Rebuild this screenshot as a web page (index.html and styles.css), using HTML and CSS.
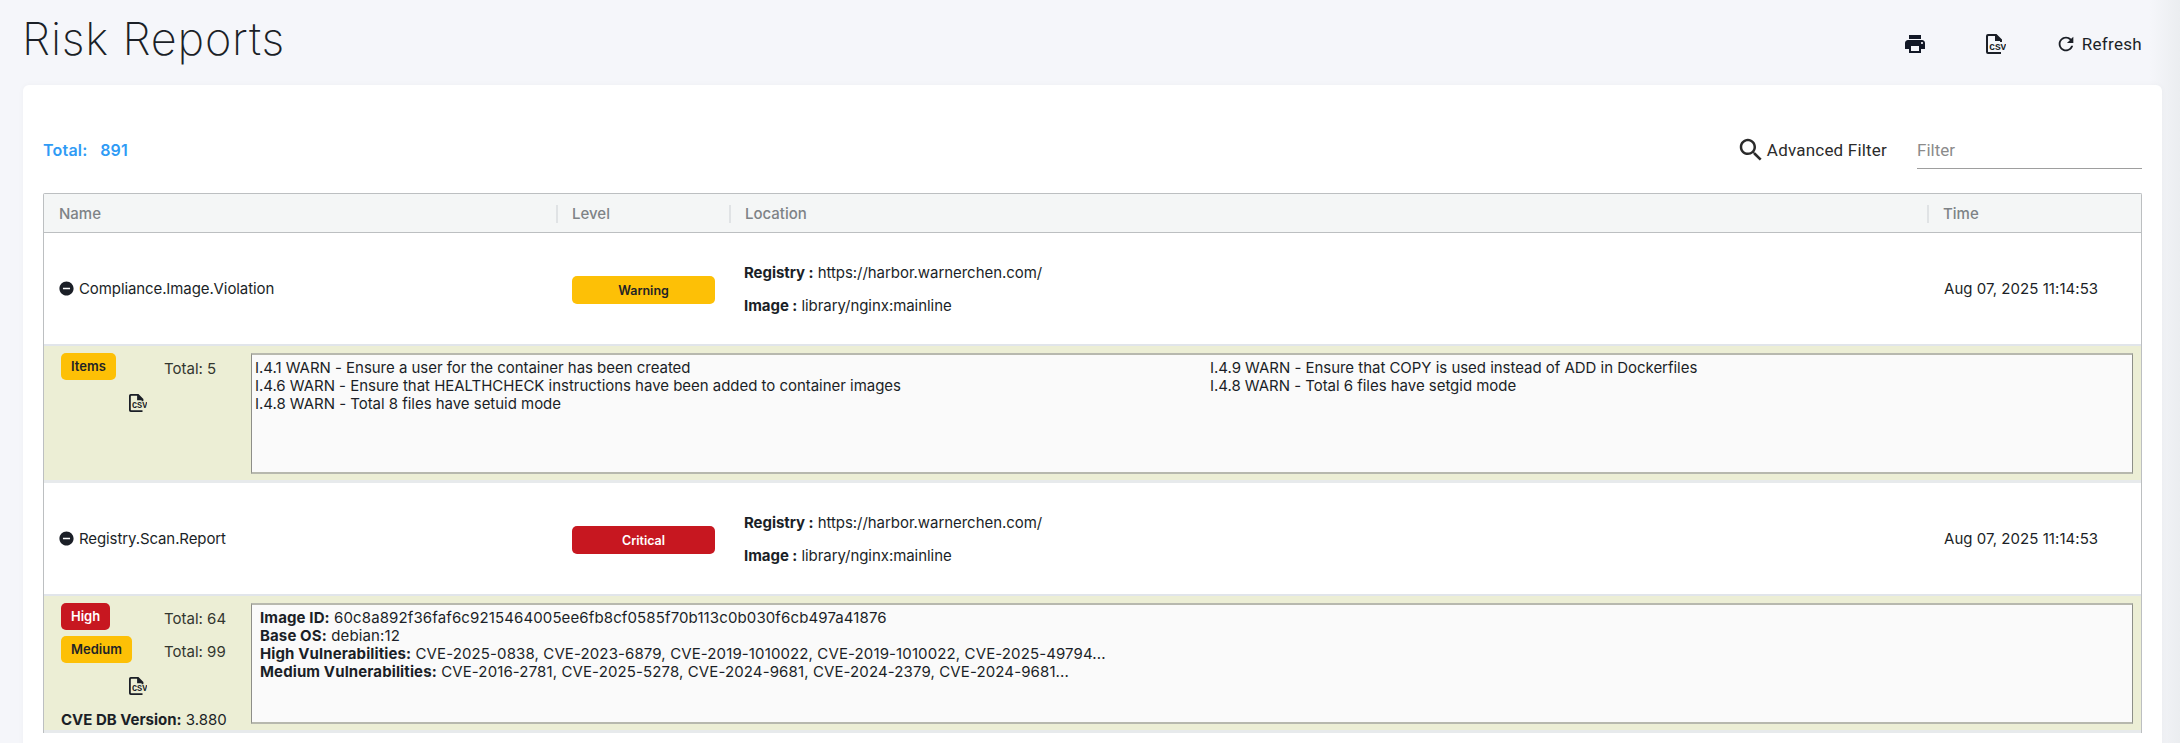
FILE: index.html
```html
<!DOCTYPE html>
<html lang="en">
<head>
    <meta charset="UTF-8">
    <title>Risk Reports</title>
    <link rel="stylesheet" href="styles.css">
</head>
<body>
    <!-- Icons -->
    <svg class="sprite" aria-hidden="true">
        <symbol id="i-print" viewBox="0 0 24 24"><path d="M19 8H5c-1.66 0-3 1.34-3 3v6h4v4h12v-4h4v-6c0-1.66-1.34-3-3-3zm-3 11H8v-5h8v5zm3-7c-.55 0-1-.45-1-1s.45-1 1-1 1 .45 1 1-.45 1-1 1zm-1-9H6v4h12V3z"/></symbol>
        <symbol id="i-refresh" viewBox="0 0 24 24"><path d="M17.65 6.35C16.2 4.9 14.21 4 12 4c-4.42 0-7.99 3.58-7.99 8s3.57 8 7.99 8c3.73 0 6.84-2.55 7.73-6h-2.08c-.82 2.33-3.04 4-5.65 4-3.31 0-6-2.69-6-6s2.69-6 6-6c1.66 0 3.14.69 4.22 1.78L13 11h7V4l-2.35 2.35z"/></symbol>
        <symbol id="i-search" viewBox="0 0 24 24"><path d="M15.5 14h-.79l-.28-.27C15.41 12.59 16 11.11 16 9.5 16 5.91 13.09 3 9.5 3S3 5.91 3 9.5 5.91 16 9.5 16c1.61 0 3.09-.59 4.23-1.57l.27.28v.79l5 4.99L20.49 19l-4.99-5zm-6 0C7.01 14 5 11.99 5 9.5S7.01 5 9.5 5 14 7.01 14 9.5 11.99 14 9.5 14z"/></symbol>
        <symbol id="i-minus" viewBox="0 0 24 24"><path d="M12 2C6.48 2 2 6.48 2 12s4.48 10 10 10 10-4.48 10-10S17.52 2 12 2zm5 11H7v-2h10v2z"/></symbol>
        <symbol id="i-csv" viewBox="0 0 20 20">
            <path d="M2 0h8.500L16 5.500V8h-2V7H9V2H2.500a.5.5 0 0 0-.5.500v15a.5.5 0 0 0 .5.500H15v2H2a2 2 0 0 1-2-2V2a2 2 0 0 1 2-2z"/>
            <text x="3.200" y="15.800" class="csv-text">CSV</text>
        </symbol>
    </svg>

    <header class="page-head">
        <h1>Risk Reports</h1>
        <div class="head-actions">
            <svg class="icon-print"><use href="#i-print"/></svg>
            <svg class="icon-csv"><use href="#i-csv"/></svg>
            <span class="refresh"><svg class="icon-refresh"><use href="#i-refresh"/></svg>Refresh</span>
        </div>
    </header>

    <main class="card">
        <div class="toolbar">
            <div class="total">Total:&nbsp;&nbsp; 891</div>
            <div class="adv-filter"><svg class="icon-search"><use href="#i-search"/></svg>Advanced Filter</div>
            <input class="filter" type="text" placeholder="Filter">
        </div>

        <div class="table">
            <div class="table-head">
                <div>Name</div>
                <div>Level</div>
                <div>Location</div>
                <div>Time</div>
            </div>

            <div class="row">
                <div class="name"><svg class="icon-minus"><use href="#i-minus"/></svg>Compliance.Image.Violation</div>
                <div class="level"><span class="level-pill warning">Warning</span></div>
                <div class="location">
                    <p><b>Registry :</b> https://harbor.warnerchen.com/</p>
                    <p><b>Image :</b> library/nginx:mainline</p>
                </div>
                <div class="time">Aug 07, 2025 11:14:53</div>
            </div>
            <div class="detail">
                <div class="summary">
                    <div class="sev-row"><span class="tag warning">Items</span><span>Total: 5</span></div>
                    <svg class="icon-csv-small"><use href="#i-csv"/></svg>
                </div>
                <div class="box box-cols">
                    <div>
                        <div>I.4.1 WARN - Ensure a user for the container has been created</div>
                        <div>I.4.6 WARN - Ensure that HEALTHCHECK instructions have been added to container images</div>
                        <div>I.4.8 WARN - Total 8 files have setuid mode</div>
                    </div>
                    <div>
                        <div>I.4.9 WARN - Ensure that COPY is used instead of ADD in Dockerfiles</div>
                        <div>I.4.8 WARN - Total 6 files have setgid mode</div>
                    </div>
                </div>
            </div>

            <div class="row">
                <div class="name"><svg class="icon-minus"><use href="#i-minus"/></svg>Registry.Scan.Report</div>
                <div class="level"><span class="level-pill critical">Critical</span></div>
                <div class="location">
                    <p><b>Registry :</b> https://harbor.warnerchen.com/</p>
                    <p><b>Image :</b> library/nginx:mainline</p>
                </div>
                <div class="time">Aug 07, 2025 11:14:53</div>
            </div>
            <div class="detail">
                <div class="summary">
                    <div class="sev-row"><span class="tag critical">High</span><span>Total: 64</span></div>
                    <div class="sev-row"><span class="tag warning">Medium</span><span>Total: 99</span></div>
                    <svg class="icon-csv-small"><use href="#i-csv"/></svg>
                    <div class="db-version"><b>CVE DB Version:</b> 3.880</div>
                </div>
                <div class="box box-scan">
                    <div><b>Image ID:</b> 60c8a892f36faf6c9215464005ee6fb8cf0585f70b113c0b030f6cb497a41876</div>
                    <div><b>Base OS:</b> debian:12</div>
                    <div><b>High Vulnerabilities:</b> CVE-2025-0838, CVE-2023-6879, CVE-2019-1010022, CVE-2019-1010022, CVE-2025-49794...</div>
                    <div><b>Medium Vulnerabilities:</b> CVE-2016-2781, CVE-2025-5278, CVE-2024-9681, CVE-2024-2379, CVE-2024-9681...</div>
                </div>
            </div>
        </div>
    </main>
</body>
</html>
```

FILE: styles.css
```css
/* Global */
* {
    box-sizing: border-box;
    margin: 0;
    padding: 0;
}

html, body {
    height: 100%;
    overflow: hidden;
}

body {
    font-family: 'Inter', sans-serif;
    font-size: 15px;
    color: #1b1f27;
    background: linear-gradient(90deg, #f5f6fa 2150px, #ebedf0 2180px);
}

svg {
    display: block;
    fill: currentColor;
    flex: none;
}

.sprite {
    display: none;
}

.csv-text {
    font-family: 'Liberation Mono', monospace;
    font-weight: 700;
    font-size: 9.500px;
}

/* Page head */
.page-head {
    height: 85px;
    display: flex;
    align-items: center;
    justify-content: space-between;
    padding: 0 38px 0 22px;
}

h1 {
    font-weight: 250;
    font-size: 45px;
    line-height: 72px;
    margin-bottom: 8px;
    letter-spacing: 0.8px;
}

.head-actions {
    display: flex;
    align-items: center;
    margin-top: 3px;
}

.icon-print {
    width: 24px;
    height: 24px;
    color: #121826;
}

.icon-csv {
    width: 20px;
    height: 20px;
    margin-left: 59px;
}

.refresh {
    display: flex;
    align-items: center;
    gap: 5px;
    margin-left: 49px;
    font-family: 'Roboto', sans-serif;
    font-size: 17px;
    letter-spacing: 0.3px;
}

.icon-refresh {
    width: 22px;
    height: 22px;
}

/* Card */
.card {
    margin-left: 23px;
    width: 2139px;
    min-height: 700px;
    padding: 43px 20px 0;
    background: #fff;
    border-radius: 6px;
    box-shadow: 0 0 6px rgba(0, 0, 0, 0.03);
}

.toolbar {
    height: 43px;
    margin-bottom: 22px;
    display: flex;
    align-items: center;
}

.total {
    font-size: 16px;
    font-weight: 600;
    color: #2f9bf5;
    letter-spacing: 0.2px;
    margin-right: auto;
}

.adv-filter {
    display: flex;
    align-items: center;
    gap: 1px;
    font-family: 'Roboto', sans-serif;
    font-size: 17px;
    color: #2b2b2b;
    letter-spacing: 0.2px;
}

.icon-search {
    width: 30px;
    height: 30px;
}

.filter {
    width: 225px;
    height: 35px;
    margin: 4px 0 0 30px;
    padding-bottom: 2px;
    border: 0;
    border-bottom: 1px solid #9e9e9e;
    background: none;
    outline: none;
    font-family: 'Roboto', sans-serif;
    font-size: 17px;
}

.filter::placeholder {
    color: #8b8b8b;
}

/* Table */
.table {
    border: 1px solid #bcbfc1;
    border-bottom: 0;
    border-radius: 2px 2px 0 0;
}

.table-head, .row {
    display: grid;
    grid-template-columns: 512px 173px 1198px 1fr;
}

.table-head {
    height: 39px;
    align-items: center;
    padding-top: 1px;
    background: #f4f6f6;
    border-bottom: 1px solid #bcbfc1;
    color: #7e8386;
    font-weight: 500;
}

.table-head div {
    padding-left: 14px;
    border-left: 2px solid #e0e3e5;
    line-height: 18px;
}

.table-head div:first-child {
    padding-left: 15px;
    border-left: 0;
}

.row {
    height: 113px;
    align-items: center;
    border-bottom: 2px solid #e1e5ea;
}

.name {
    display: flex;
    align-items: center;
    gap: 4px;
    padding-left: 14px;
    letter-spacing: -0.1px;
}

.icon-minus {
    width: 17px;
    height: 17px;
}

.level {
    padding-left: 16px;
}

.level-pill {
    display: flex;
    align-items: center;
    justify-content: center;
    width: 143px;
    height: 28px;
    margin-top: 3px;
    border-radius: 5px;
    font-size: 12.500px;
    font-weight: 600;
}

.warning {
    background: #fdc006;
    color: #1f2326;
}

.critical {
    background: #c71720;
    color: #fff;
}

.location {
    padding-left: 15px;
}

.location p {
    line-height: 33px;
    letter-spacing: -0.05px;
}

.location b, .box b, .db-version b {
    font-weight: 700;
}

.time {
    padding-left: 17px;
    letter-spacing: 0.05px;
}

/* Expanded detail */
.detail {
    height: 137px;
    display: grid;
    grid-template-columns: 190px 1fr;
    padding: 7px 8px 6px 17px;
    background: #eceed5;
    border-bottom: 3px solid #e7eaec;
}

.summary {
    height: 126px;
    display: flex;
    flex-direction: column;
    color: #33362f;
}

.sev-row {
    display: grid;
    grid-template-columns: 103px 1fr;
    height: 33px;
    line-height: 31px;
}

.tag {
    justify-self: start;
    height: 27px;
    padding: 0 10px;
    border-radius: 5px;
    font-size: 13px;
    font-weight: 600;
    line-height: 27px;
}

.icon-csv-small {
    width: 18px;
    height: 18px;
    margin: 8px 0 0 68px;
    color: #1b1f27;
}

.db-version {
    margin-top: auto;
    color: #1b1f27;
}

.box {
    height: 121px;
    background: #fafafa;
    border: 2px solid #b7b8ae;
    border-left: 1px solid #8d8e88;
    border-right: 1px solid #8d8e88;
    line-height: 18px;
}

.box-cols {
    display: grid;
    grid-template-columns: 955px 1fr;
    padding: 4px 3px;
    letter-spacing: -0.03px;
}

.box-scan {
    padding: 4px 8px;
    letter-spacing: 0.12px;
}
```
